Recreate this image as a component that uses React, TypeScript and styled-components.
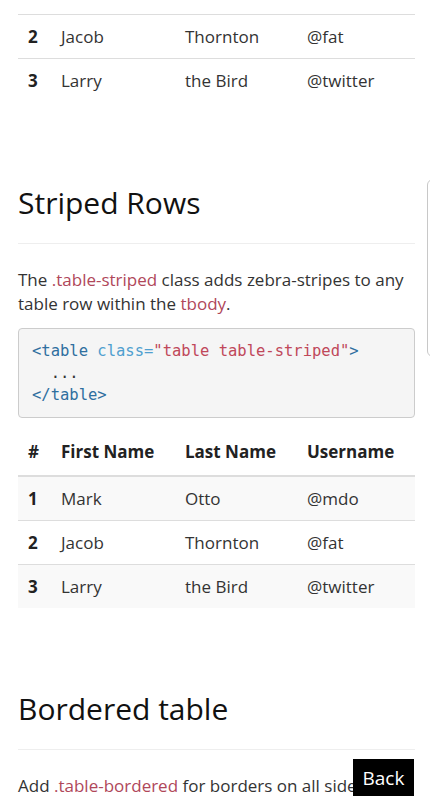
import React from "react";
import styled, { createGlobalStyle } from "styled-components";

const GlobalStyle = createGlobalStyle`
  html, body {
    margin: 0;
    padding: 0;
    background: #fff;
  }
  body {
    font-family: "Open Sans", "Noto Sans", sans-serif;
    font-size: 17px;
    line-height: 24px;
    color: #333;
  }
`;

interface Person {
  id: number;
  first: string;
  last: string;
  user: string;
}

const people: Person[] = [
  { id: 1, first: "Mark", last: "Otto", user: "@mdo" },
  { id: 2, first: "Jacob", last: "Thornton", user: "@fat" },
  { id: 3, first: "Larry", last: "the Bird", user: "@twitter" },
];

export default function App() {
  return (
    <>
      <GlobalStyle />
      <Page>
        <Table>
          <Cols />
          <tbody>
            {people.slice(1).map((p) => (
              <Row key={p.id}>
                <IdCell>{p.id}</IdCell>
                <Cell>{p.first}</Cell>
                <Cell>{p.last}</Cell>
                <Cell>{p.user}</Cell>
              </Row>
            ))}
          </tbody>
        </Table>

        <PageHeader>
          <Title>Striped Rows</Title>
        </PageHeader>
        <Lead>
          The <Code>.table-striped</Code> class adds zebra-stripes to any table
          row within the <Code>tbody</Code>.
        </Lead>
        <Pre>
          <Tag>&lt;table</Tag> <Attr>class=</Attr>
          <Str>"table table-striped"</Str>
          <Tag>&gt;</Tag>
          {"\n  ...\n"}
          <Tag>&lt;/table&gt;</Tag>
        </Pre>
        <Table>
          <Cols />
          <thead>
            <tr>
              <Head>#</Head>
              <Head>First Name</Head>
              <Head>Last Name</Head>
              <Head>Username</Head>
            </tr>
          </thead>
          <tbody>
            {people.map((p, i) => (
              <Row key={p.id} $striped={i % 2 === 0}>
                <IdCell>{p.id}</IdCell>
                <Cell>{p.first}</Cell>
                <Cell>{p.last}</Cell>
                <Cell>{p.user}</Cell>
              </Row>
            ))}
          </tbody>
        </Table>

        <PageHeader>
          <Title>Bordered table</Title>
        </PageHeader>
        <Lead>
          Add <Code>.table-bordered</Code> for borders on all sides of the table
          and cells.
        </Lead>
      </Page>
      <ScrollThumb />
      <BackButton>Back</BackButton>
    </>
  );
}

const Cols = () => (
  <colgroup>
    <col style={{ width: 33 }} />
    <col style={{ width: 124 }} />
    <col style={{ width: 122 }} />
    <col />
  </colgroup>
);

const Page = styled.div`
  padding: 14px 15px 0 18px;
  overflow: hidden;
  height: 800px;
  box-sizing: border-box;
`;

const Table = styled.table`
  width: 100%;
  border-collapse: collapse;
  table-layout: fixed;
  margin-bottom: 20px;
`;

const Row = styled.tr<{ $striped?: boolean }>`
  background: ${({ $striped }) => ($striped ? "#f9f9f9" : "transparent")};
`;

const Cell = styled.td`
  padding: 10px 10px 9px;
  border-top: 1px solid #ddd;
  text-align: left;
  vertical-align: top;
  white-space: nowrap;
`;

const IdCell = styled(Cell)`
  font-weight: 700;
  color: #222;
`;

const Head = styled.th`
  padding: 10px 10px 11px;
  border-bottom: 2px solid #ddd;
  text-align: left;
  font-weight: 700;
  color: #222;
  white-space: nowrap;
`;

const PageHeader = styled.div`
  margin-top: 84px;
  padding-bottom: 24px;
  border-bottom: 1px solid #eee;
`;

const Title = styled.h1`
  margin: 0;
  font-size: 30px;
  line-height: 33px;
  font-weight: 400;
  color: #111;
`;

const Lead = styled.p`
  margin: 24px 0 12px;
`;

const Code = styled.span`
  color: #b0475a;
`;

const Pre = styled.pre`
  margin: 0 0 12px;
  padding: 11px 13px;
  background: #f5f5f5;
  border: 1px solid #ccc;
  border-radius: 4px;
  font-family: "DejaVu Sans Mono", "Liberation Mono", monospace;
  font-size: 15.5px;
  line-height: 22px;
  color: #333;
  white-space: pre;
  overflow: hidden;
`;

const Tag = styled.span`
  color: #2f6f9f;
`;

const Attr = styled.span`
  color: #4f9fcf;
`;

const Str = styled.span`
  color: #c0485a;
`;

const ScrollThumb = styled.div`
  position: fixed;
  left: 427px;
  top: 179px;
  width: 12px;
  height: 176px;
  border: 1px solid #c8c8c8;
  border-radius: 6px;
  background: #fff;
`;

const BackButton = styled.button`
  position: fixed;
  left: 353px;
  top: 759px;
  width: 61px;
  height: 37px;
  padding: 0;
  border: none;
  background: #000;
  color: #fff;
  font-family: "Open Sans", sans-serif;
  font-size: 19px;
  line-height: 24px;
`;
